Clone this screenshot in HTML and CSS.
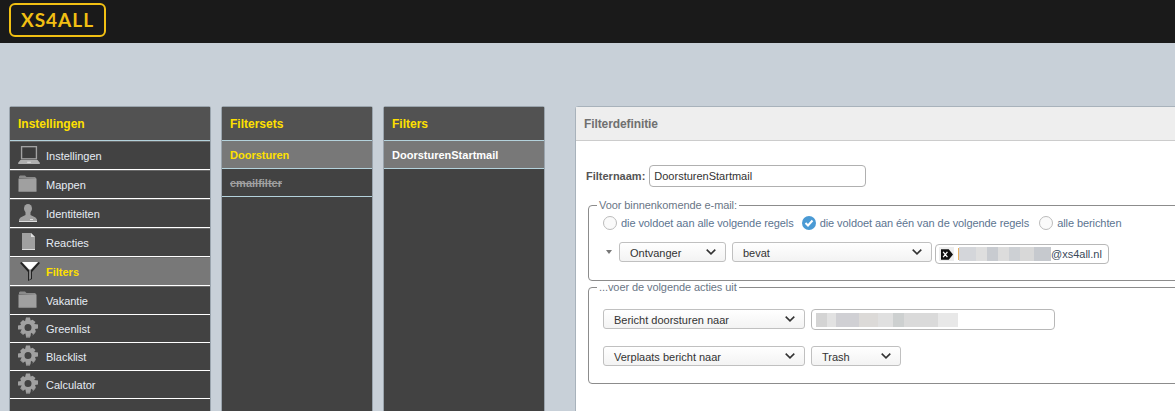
FILE: index.html
```html
<!doctype html>
<html lang="nl">
<head>
    <meta charset="UTF-8">
    <title>Filterdefinitie</title>
    <link rel="stylesheet" href="styles.css">
</head>
<body>
    <svg class="defs" width="0" height="0">
        <symbol id="ico-laptop" viewBox="0 0 24 20">
            <path fill="#a2a2a2" d="M3 0h18v15H3z"/>
            <path fill="#3c3c3c" d="M4.500 1.500h15v12h-15z"/>
            <path fill="#b0b0b0" d="M2.500 15.500h19l2.500 3v1.500H0v-1.500z"/>
            <path fill="#eee" d="M10 17.500h4v1h-4z"/>
        </symbol>
        <symbol id="ico-folder" viewBox="0 0 19 17">
            <path fill="#8a8a8a" d="M1 3V1.500L2 .500h5l1.500 1.500H17l1 1v1z"/>
            <path fill="#a0a0a0" d="M.5 3.500h18V15.500H.5z"/>
            <path fill="#ccc" d="M.5 15.500h18V16.500H.5z"/>
        </symbol>
        <symbol id="ico-person" viewBox="0 0 18 18">
            <ellipse fill="#a0a0a0" cx="9" cy="4.500" rx="4" ry="4.500"/>
            <path fill="#a0a0a0" d="M6.500 8h5v3l5 2.500 1.500 2v2H0v-2l1.500-2 5-2.500z"/>
            <path fill="#ddd" d="M0 17h18v1H0zM11 15h3v1h-3z"/>
        </symbol>
        <symbol id="ico-page" viewBox="0 0 13 17">
            <path fill="#a0a0a0" d="M0 0h9l4 4v13H0z"/>
            <path fill="#ddd" d="M9 0l4 4H9zM0 16h13v1H0z"/>
        </symbol>
        <symbol id="ico-funnel" viewBox="0 0 20 19">
            <path fill="#222" d="M0 1l1.500-1L9 8v10l2-1.500V8L18.500 0 20 1l-8 9v7l-4 2v-9z"/>
            <path fill="#fff" d="M2 0h16l-7 7.500H9z"/>
            <path fill="#888" d="M9.500 8H11v8l-1.500 1z"/>
        </symbol>
        <symbol id="ico-gear" viewBox="0 0 20 20">
            <path fill="#a0a0a0" fill-rule="evenodd" d="M8 0h4l.6 3 2-.8L17.500 4.500l-1.300 2 3.800.5v4l-3 .6.800 2.200-2.800 2.800-2-1.300-.5 3.700H8l-.6-3-2.100.8-2.800-2.800 1.300-2L0 12V8l3-.6-.8-2.100L5 2.500l2 1.300zM10 6.500a3.500 3.500 0 1 0 0 7 3.500 3.500 0 0 0 0-7z"/>
            <path fill="none" stroke="#ddd" stroke-width=".7" d="M2.500 14.500l2.800 2.800M8 19.500h4M14.700 17.300l2.800-2.800"/>
        </symbol>
        <symbol id="ico-chevron" viewBox="0 0 10 6">
            <path fill="none" stroke="#333" stroke-width="1.600" d="M.7 .7L5 4.800 9.300 .7"/>
        </symbol>
    </svg>

    <header class="topbar">
        <div class="logo">XS4ALL</div>
    </header>

    <main class="columns">
        <section class="panel panel-menu">
            <h2 class="panel-title">Instellingen</h2>
            <ul class="list">
                <li class="row"><svg class="ico ico-laptop"><use href="#ico-laptop"/></svg>Instellingen</li>
                <li class="row"><svg class="ico ico-folder"><use href="#ico-folder"/></svg>Mappen</li>
                <li class="row"><svg class="ico ico-person"><use href="#ico-person"/></svg>Identiteiten</li>
                <li class="row"><svg class="ico ico-page"><use href="#ico-page"/></svg>Reacties</li>
                <li class="row active"><svg class="ico ico-funnel"><use href="#ico-funnel"/></svg>Filters</li>
                <li class="row"><svg class="ico ico-folder"><use href="#ico-folder"/></svg>Vakantie</li>
                <li class="row short"><svg class="ico ico-gear"><use href="#ico-gear"/></svg>Greenlist</li>
                <li class="row short"><svg class="ico ico-gear"><use href="#ico-gear"/></svg>Blacklist</li>
                <li class="row short"><svg class="ico ico-gear"><use href="#ico-gear"/></svg>Calculator</li>
            </ul>
        </section>

        <section class="panel panel-sets">
            <h2 class="panel-title">Filtersets</h2>
            <ul class="list">
                <li class="row plain active">Doorsturen</li>
                <li class="row plain off">emailfilter</li>
            </ul>
        </section>

        <section class="panel panel-filters">
            <h2 class="panel-title">Filters</h2>
            <ul class="list">
                <li class="row plain active white">DoorsturenStartmail</li>
            </ul>
        </section>

        <section class="detail">
            <h2 class="detail-title">Filterdefinitie</h2>
            <div class="detail-body">
                <div class="name-line">
                    <label class="name-label" for="filternaam">Filternaam:</label>
                    <input class="text-input name-input" id="filternaam" type="text" value="DoorsturenStartmail">
                </div>

                <fieldset class="group group-rules">
                    <legend>Voor binnenkomende e-mail:</legend>
                    <div class="radios">
                        <span class="radio-item"><span class="radio"></span>die voldoet aan alle volgende regels</span>
                        <span class="radio-item"><span class="radio checked"><svg viewBox="0 0 14 14"><path fill="none" stroke="#fff" stroke-width="2" d="M3.500 7l2.500 2.500 4.500-5"/></svg></span>die voldoet aan één van de volgende regels</span>
                        <span class="radio-item radio-last"><span class="radio"></span>alle berichten</span>
                    </div>
                    <div class="rule-line">
                        <span class="caret"></span>
                        <div class="select w-ontvanger">Ontvanger<svg class="chevron"><use href="#ico-chevron"/></svg></div>
                        <div class="select w-bevat">bevat<svg class="chevron"><use href="#ico-chevron"/></svg></div>
                        <div class="token-box">
                            <span class="token-del"><svg viewBox="0 0 14 12"><path fill="#111" d="M0 0h9l5 6-5 6H0z"/><path stroke="#fff" stroke-width="1.500" d="M2.500 3l5 6M7.500 3l-5 6"/></svg></span>
                            <span class="cursor"></span><span class="blur blur-mail"></span><span>@xs4all.nl</span>
                        </div>
                    </div>
                </fieldset>

                <fieldset class="group group-actions">
                    <legend>...voer de volgende acties uit</legend>
                    <div class="action-line">
                        <div class="select w-action">Bericht doorsturen naar<svg class="chevron"><use href="#ico-chevron"/></svg></div>
                        <div class="address-box"><span class="blur blur-address"></span></div>
                    </div>
                    <div class="action-line">
                        <div class="select w-action">Verplaats bericht naar<svg class="chevron"><use href="#ico-chevron"/></svg></div>
                        <div class="select w-trash">Trash<svg class="chevron"><use href="#ico-chevron"/></svg></div>
                    </div>
                </fieldset>
            </div>
        </section>
    </main>
</body>
</html>
```

FILE: styles.css
```css
html, body {
    margin: 0;
    padding: 0;
    height: 411px;
    overflow: hidden;
}

body {
    background: #c8d0d8;
    font-family: "Liberation Sans", Arial, sans-serif;
    font-size: 11px;
    color: #333;
}

.defs {
    position: absolute;
}

.topbar {
    height: 43px;
    background: #1a1a1a;
    padding: 3px 0 0 9px;
    box-sizing: border-box;
}

.logo {
    width: 97px;
    height: 34px;
    box-sizing: border-box;
    border: 2px solid #f2c013;
    border-radius: 6px;
    color: #f2c013;
    font-family: Lato, sans-serif;
    font-size: 19px;
    font-weight: 700;
    letter-spacing: 1px;
    line-height: 30px;
    text-align: center;
}

.columns {
    display: flex;
    align-items: flex-start;
    padding: 63px 0 0 9px;
    width: 1400px;
}

.panel {
    height: 400px;
    flex: none;
    box-sizing: border-box;
    background: #424242;
    border: 1px solid #9aa4ad;
    border-bottom: 0;
    border-radius: 3px 3px 0 0;
    margin-right: 10px;
}

.panel-menu {
    width: 202px;
}

.panel-sets {
    width: 152px;
}

.panel-filters {
    width: 162px;
    margin-right: 30px;
}

.panel-title {
    margin: 0;
    height: 34px;
    box-sizing: border-box;
    padding: 0 8px;
    background: #525252;
    border-bottom: 1px solid #b4d2dc;
    color: #ffe000;
    font-size: 12px;
    font-weight: bold;
    line-height: 35px;
}

.list {
    list-style: none;
    margin: 0;
    padding: 0;
}

.row {
    display: flex;
    align-items: center;
    height: 29px;
    box-sizing: border-box;
    border-top: 1px solid #6a6a6a;
    border-bottom: 1px solid #fff;
    color: #e6ecf4;
    position: relative;
    padding-left: 36px;
}

.row.short {
    height: 28px;
    padding-top: 1px;
    border-top: 0;
}

.row.active {
    background: #787878;
    color: #ffe000;
    font-weight: bold;
}

.row.plain {
    height: 28px;
    padding-left: 8px;
    border-top: 0;
    border-bottom: 1px solid #b4d2dc;
}

.row.white {
    color: #fff;
}

.row.off {
    color: #a0a0a0;
    font-weight: bold;
    text-decoration: line-through;
}

.ico {
    position: absolute;
    left: 8px;
    top: 2px;
    width: 20px;
    height: 21px;
}

.ico-laptop {
    width: 22px;
    height: 18px;
    top: 4px;
}

.ico-folder {
    width: 19px;
    height: 17px;
    top: 4px;
}

.ico-person {
    width: 18px;
    height: 18px;
    left: 9px;
    top: 4px;
}

.ico-page {
    width: 13px;
    height: 17px;
    left: 12px;
    top: 4px;
}

.ico-funnel {
    width: 20px;
    height: 19px;
    left: 10px;
    top: 4px;
}

.detail {
    width: 700px;
    height: 400px;
    flex: none;
    box-sizing: border-box;
    background: #fff;
    border: 1px solid #a8b2bb;
    border-radius: 3px 3px 0 0;
}

.detail-title {
    margin: 0;
    height: 34px;
    box-sizing: border-box;
    padding: 0 8px;
    background: #eeeeee;
    border-bottom: 1px solid #cccccc;
    color: #707070;
    font-size: 12px;
    font-weight: bold;
    letter-spacing: -0.1px;
    line-height: 34px;
}

.detail-body {
    padding: 23px 0 0 10px;
}

.name-line {
    display: flex;
    align-items: center;
    gap: 4px;
    height: 23px;
}

.name-label {
    font-weight: bold;
    color: #555;
    padding-top: 1px;
}

.text-input {
    box-sizing: border-box;
    height: 22px;
    border: 1px solid #b0b0b0;
    border-radius: 4px;
    padding: 1px 4px 0;
    font: 11px "Liberation Sans", Arial, sans-serif;
    color: #333;
}

.name-input {
    width: 217px;
}

.group {
    margin: 0 0 0 2px;
    padding: 0;
    width: 660px;
    box-sizing: border-box;
    border: 1px solid #8c8c8c;
    border-radius: 4px;
    min-width: 0;
}

.group legend {
    margin-left: 8px;
    padding: 0 2px;
    color: #6a7686;
    font-size: 11px;
    letter-spacing: -0.08px;
    line-height: 13px;
}

.group-rules {
    height: 82px;
    margin-top: 12px;
}

.group-actions {
    height: 103px;
    margin-top: 0;
}

.radios {
    display: flex;
    gap: 8px;
    padding: 0 0 0 14px;
    height: 16px;
    margin-top: 3px;
    color: #5c7490;
    letter-spacing: -0.08px;
}

.radio-item {
    display: flex;
    align-items: center;
    gap: 4px;
}

.radio-last {
    margin-left: 2px;
}

.radio {
    width: 14px;
    height: 14px;
    box-sizing: border-box;
    border: 1px solid #bbb;
    border-radius: 50%;
    background: #fafafa;
}

.radio.checked {
    border: 0;
    background: #4a9ad4;
}

.radio svg {
    display: block;
    width: 14px;
    height: 14px;
}

.rule-line {
    display: flex;
    align-items: flex-start;
    margin-top: 11px;
    padding-left: 17px;
}

.caret {
    width: 0;
    height: 0;
    margin: 8px 7px 0 0;
    border-left: 3.500px solid transparent;
    border-right: 3.500px solid transparent;
    border-top: 4px solid #777;
}

.select {
    display: flex;
    align-items: center;
    justify-content: space-between;
    flex: none;
    box-sizing: border-box;
    height: 20px;
    padding: 1px 11px 0 10px;
    border: 1px solid #c0c0c0;
    border-radius: 3px;
    background: linear-gradient(#ffffff, #f3f3f3);
    color: #333;
}

.chevron {
    width: 10px;
    height: 6px;
    margin-right: -2px;
    margin-top: -2px;
}

.w-ontvanger {
    width: 107px;
    margin-right: 6px;
}

.w-bevat {
    width: 200px;
    margin-right: 3px;
}

.w-action {
    width: 202px;
    margin-right: 6px;
}

.w-trash {
    width: 90px;
}

.token-box {
    display: flex;
    align-items: center;
    box-sizing: border-box;
    width: 174px;
    height: 20px;
    margin-top: 2px;
    padding-left: 3px;
    border: 1px solid #b8b8b8;
    border-radius: 4px;
    color: #3a4a5a;
}

.token-del {
    display: flex;
    align-items: center;
    justify-content: center;
    width: 15px;
    height: 14px;
    background: #eeeeee;
}

.token-del svg {
    width: 12px;
    height: 11px;
}

.cursor {
    width: 1px;
    height: 12px;
    margin-left: 4px;
    background: #e8b060;
}

.blur {
    display: block;
    height: 14px;
}

.blur-mail {
    width: 92px;
    background: linear-gradient(90deg, #d4d6da 0 18%, #dedede 18% 30%, #c8cbd0 30% 42%, #dcdcdc 42% 54%, #cdd0d4 54% 66%, #d8d8d8 66% 82%, #c6c9ce 82% 100%);
}

.action-line {
    display: flex;
    align-items: flex-start;
    padding-left: 14px;
    margin-top: 16px;
}

.group-actions .action-line:first-of-type {
    margin-top: 15px;
}

.address-box {
    box-sizing: border-box;
    width: 244px;
    height: 21px;
    padding: 3px 0 0 4px;
    border: 1px solid #b8b8b8;
    border-radius: 4px;
}

.blur-address {
    width: 142px;
    background: linear-gradient(90deg, #d4d4d4 0 8%, #e2e2e2 8% 14%, #d0d0d4 14% 30%, #dcdad8 30% 44%, #e0e0e0 44% 54%, #cdd0d0 54% 62%, #dadada 62% 86%, #e8e8e8 86% 100%);
}
```
